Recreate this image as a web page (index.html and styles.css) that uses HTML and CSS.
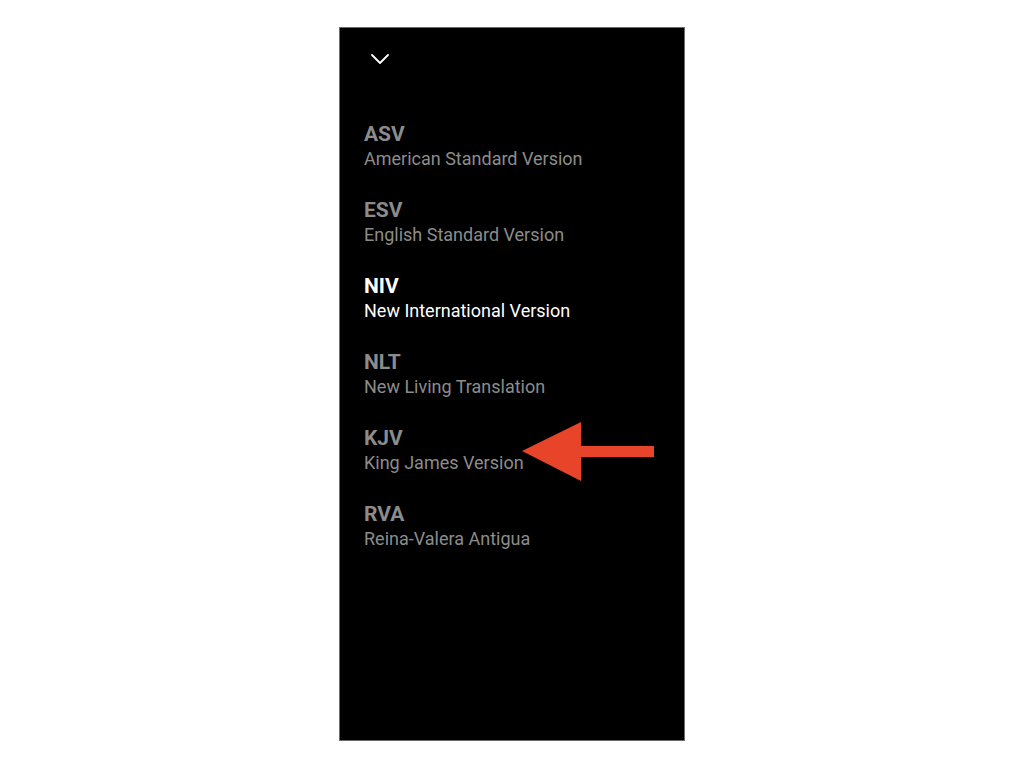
FILE: index.html
```html
<!DOCTYPE html>
<html>
<head>
<meta charset="utf-8">
<link rel="stylesheet" href="styles.css">
</head>
<body>
<div class="stage">
  <div class="panel">
    <div class="header">
      <svg class="chevron" width="18" height="10" viewBox="0 0 18 10"><path d="M1 1 L9 9 L17 1" fill="none" stroke="#fff" stroke-width="1.8" stroke-linecap="round" stroke-linejoin="round"/></svg>
    </div>
    <ul class="list">
      <li class="item"><div class="code">ASV</div><div class="name">American Standard Version</div></li>
      <li class="item"><div class="code">ESV</div><div class="name">English Standard Version</div></li>
      <li class="item active"><div class="code">NIV</div><div class="name">New International Version</div></li>
      <li class="item"><div class="code">NLT</div><div class="name">New Living Translation</div></li>
      <li class="item"><div class="code">KJV</div><div class="name">King James Version</div></li>
      <li class="item"><div class="code">RVA</div><div class="name">Reina-Valera Antigua</div></li>
    </ul>
    <svg class="arrow" width="134" height="62" viewBox="0 0 134 62"><polygon points="0,29 59,0 59,24 132,24 132,35 59,35 59,59" fill="#e8442a"/></svg>
  </div>
</div>
</body>
</html>
```
FILE: styles.css
```css
html, body {
  margin: 0;
  padding: 0;
  background: #fff;
}
.stage {
  display: flex;
  justify-content: center;
  padding-top: 27px;
}
.panel {
  position: relative;
  width: 346px;
  height: 714px;
  background: #000;
  box-sizing: border-box;
  border: 1px solid #6b6b6b;
  font-family: Roboto, "Noto Sans", sans-serif;
}
.header {
  height: 93px;
  padding-left: 31px;
  padding-top: 26px;
  box-sizing: border-box;
}
.chevron {
  display: block;
}
.list {
  list-style: none;
  margin: 0;
  padding: 0 0 0 24px;
}
.item {
  height: 76px;
  color: #8c8c8c;
}
.item.active {
  color: #fff;
}
.code {
  font-weight: 700;
  font-size: 21px;
  line-height: 26px;
}
.name {
  font-size: 18px;
  line-height: 23px;
}
.arrow {
  position: absolute;
  left: 182px;
  top: 394px;
}
```
